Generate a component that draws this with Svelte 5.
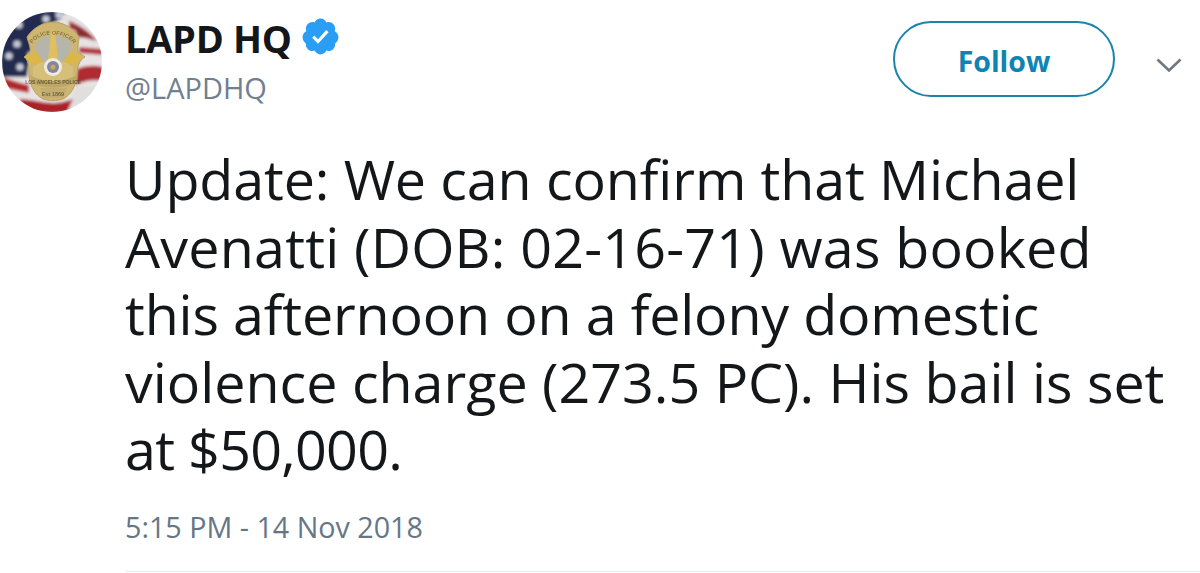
<script>
  const stars = [[19,56],[16,33],[18,14],[33,27],[45,8],[8,45],[30,44],[58,4]];
  const text = [
    { t: "Update: We can confirm that Michael", s: -0.11 },
    { t: "Avenatti (DOB: 02-16-71) was booked", s: 0.2 },
    { t: "this afternoon on a felony domestic", s: -0.17 },
    { t: "violence charge (273.5 PC). His bail is set", s: 0 },
    { t: "at $50,000.", s: -0.7 }
  ];
</script>

<main class="tweet">
  <header class="head">
    <svg class="avatar" viewBox="0 0 102 102" width="102" height="102" aria-label="LAPD badge">
      <defs>
        <clipPath id="round"><circle cx="51" cy="51" r="50"/></clipPath>
        <filter id="soft" x="-10%" y="-10%" width="120%" height="120%"><feGaussianBlur stdDeviation="1.4"/></filter>
        <filter id="softer" x="-10%" y="-10%" width="120%" height="120%"><feGaussianBlur stdDeviation="0.7"/></filter>
        <filter id="fuzz" x="-10%" y="-10%" width="120%" height="120%"><feGaussianBlur stdDeviation="0.25"/></filter>
        <path id="arc" d="M31 34C36 20 66 20 73 34"/>
      </defs>
      <g clip-path="url(#round)">
        <g filter="url(#soft)">
          <rect width="102" height="102" fill="#e8e4e5"/>
          <path d="M0 0H64V6C44 14 30 30 26 66H0Z" fill="#202c50"/>
          <path d="M60 2C76 8 88 16 100 30L92 36C84 26 76 18 62 12Z" fill="#e4e0e0"/>
          <path d="M68 10C78 14 88 20 96 30L88 28C82 22 76 20 68 18Z" fill="#a93036"/>
          <path d="M72 12C80 16 86 22 92 28L76 26Z" fill="#8e2a30"/>
          <path d="M78 36L102 38V44L78 42Z" fill="#b3303a"/>
          <path d="M76 58C84 54 94 54 102 56V70C92 68 84 70 74 74Z" fill="#b02c30"/>
          <path d="M0 66C8 68 18 72 28 74V82C18 80 8 78 0 76Z" fill="#b4272c"/>
          <path d="M18 88C30 88 42 92 52 92C60 92 66 90 72 88L66 102H24Z" fill="#ab2327"/>
          <path d="M72 76C82 74 92 76 102 76V102H72Z" fill="#e2dede"/>
          {#each stars as s}
            <circle cx={s[0]} cy={s[1]} r="3.6" fill="#c8ccd8"/>
          {/each}
        </g>
        <g filter="url(#softer)">
          <path d="M52 11C62 11 72 17 78 26C78 32 76 36 77 41L84 46C78 49 76 56 76 66C74 76 70 84 62 88C56 90 48 90 42 88C34 84 30 76 28 66C28 56 28 49 23 46L29 41C30 36 27 31 26 26C32 17 42 11 52 11Z" fill="#ceb671" stroke="#b5a060" stroke-width="1"/>
          <path d="M34 33C40 26 46 24 52 24C58 24 66 26 71 33L66 52H38Z" fill="#b5b5ab"/>
          <path d="M50 20L52 17L54 20L57 50H47Z" fill="#dfc05c"/>
          <path d="M24 46L35 41L42 50L33 54Z" fill="#dcb744"/>
          <path d="M82 46L70 41L62 50L71 54Z" fill="#dcb744"/>
          <path d="M32 56C40 48 64 48 72 56L72 70H32Z" fill="#d6bf79"/>
          <circle cx="52" cy="56" r="9" fill="#efebe0"/>
          <circle cx="52" cy="56" r="6" fill="#85849c"/>
          <circle cx="52" cy="56" r="2.6" fill="#c2aa62"/>
          <path d="M29 64C42 72 62 72 76 64L74 72C62 78 42 78 31 72Z" fill="#bda766"/>
          <path d="M39 77H66L62 87H43Z" fill="#c2ac72"/>
        </g>
        <g class="tiny" filter="url(#fuzz)">
          <text class="t1"><textPath href="#arc" startOffset="50%" text-anchor="middle">POLICE OFFICER</textPath></text>
          <text class="t2" x="52" y="73" text-anchor="middle">LOS ANGELES POLICE</text>
          <text class="t3" x="52" y="85" text-anchor="middle">Est 1869</text>
        </g>
      </g>
    </svg>
    <div class="names">
      <div class="name-row">
        <span class="name">LAPD HQ</span>
        <svg class="verified" viewBox="0 0 24 24" width="41" height="41" aria-label="Verified">
          <path fill="#2a9df4" d="M22.5 12.5c0-1.58-.875-2.95-2.148-3.6.154-.435.238-.905.238-1.4 0-2.21-1.71-3.998-3.818-3.998-.47 0-.92.084-1.336.25C14.818 2.415 13.51 1.5 12 1.5s-2.816.917-3.437 2.25c-.415-.165-.866-.25-1.336-.25-2.11 0-3.818 1.79-3.818 4 0 .494.083.964.237 1.4-1.272.65-2.147 2.018-2.147 3.6 0 1.495.782 2.798 1.942 3.486-.02.17-.032.34-.032.514 0 2.21 1.708 4 3.818 4 .47 0 .92-.086 1.335-.25.62 1.334 1.926 2.25 3.437 2.25 1.512 0 2.818-.916 3.437-2.25.415.163.865.248 1.336.248 2.11 0 3.818-1.79 3.818-4 0-.174-.012-.344-.033-.513 1.158-.687 1.943-1.99 1.943-3.484z"/>
          <path fill="#fff" d="M10.54 16.2l-3.44-3.46 1.3-1.32 2.1 2.12 4.9-5.32 1.35 1.25z"/>
        </svg>
      </div>
      <div class="handle">@LAPDHQ</div>
    </div>
    <button class="follow">Follow</button>
    <svg class="chev" viewBox="0 0 28 18" width="28" height="18" aria-hidden="true">
      <path d="M2.5 3.5L14 14.5L25.5 3.5" fill="none" stroke="#6e7880" stroke-width="2.6"/>
    </svg>
  </header>
  <p class="body">
    {#each text as line}<span class="line" style="letter-spacing: {line.s}px">{line.t}</span>{/each}
  </p>
  <div class="time">5:15 PM - 14 Nov 2018</div>
  <div class="rule"></div>
</main>

<style>
  :global(body) { margin: 0; background: #fff; }
  .tweet {
    width: 1200px;
    height: 573px;
    box-sizing: border-box;
    overflow: hidden;
    font-family: "Open Sans", "Noto Sans", sans-serif;
    color: #14171a;
  }
  .head {
    display: flex;
    align-items: flex-start;
    padding: 11px 0 0 1px;
    height: 145px;
    box-sizing: border-box;
  }
  .avatar { flex: none; margin-right: 22px; }
  .tiny { font-family: "Liberation Sans", sans-serif; font-weight: 700; opacity: 0.75; }
  .t1 { font-size: 5.6px; fill: #6d6038; }
  .t2 { font-size: 5px; fill: #4f4426; }
  .t3 { font-size: 5.5px; fill: #5a4e2c; }
  .names { flex: 1; }
  .name-row { display: flex; align-items: center; gap: 8px; height: 55px; }
  .name { font-size: 38px; font-weight: 700; letter-spacing: -0.3px; line-height: 55px; }
  .verified { margin-top: -5px; }
  .handle { font-size: 29px; color: #71808f; line-height: 36px; margin-top: 4px; }
  .follow {
    flex: none;
    width: 222px;
    height: 76px;
    margin-top: 10px;
    background: #fff;
    border: 2px solid #1b84ab;
    border-radius: 38px;
    color: #0f84b4;
    font-family: inherit;
    font-size: 28.5px;
    font-weight: 700;
    padding: 4px 0 0;
  }
  .chev { flex: none; margin: 45px 17px 0 40px; }
  .body { margin: 0; padding-left: 125px; font-size: 55.6px; line-height: 67.5px; }
  .line { display: block; white-space: nowrap; }
  .time { margin: 26px 0 0 125px; font-size: 28.7px; line-height: 36px; color: #657786; }
  .rule { margin: 26px 0 0 126px; height: 1px; background: #e6ecf0; }
</style>
